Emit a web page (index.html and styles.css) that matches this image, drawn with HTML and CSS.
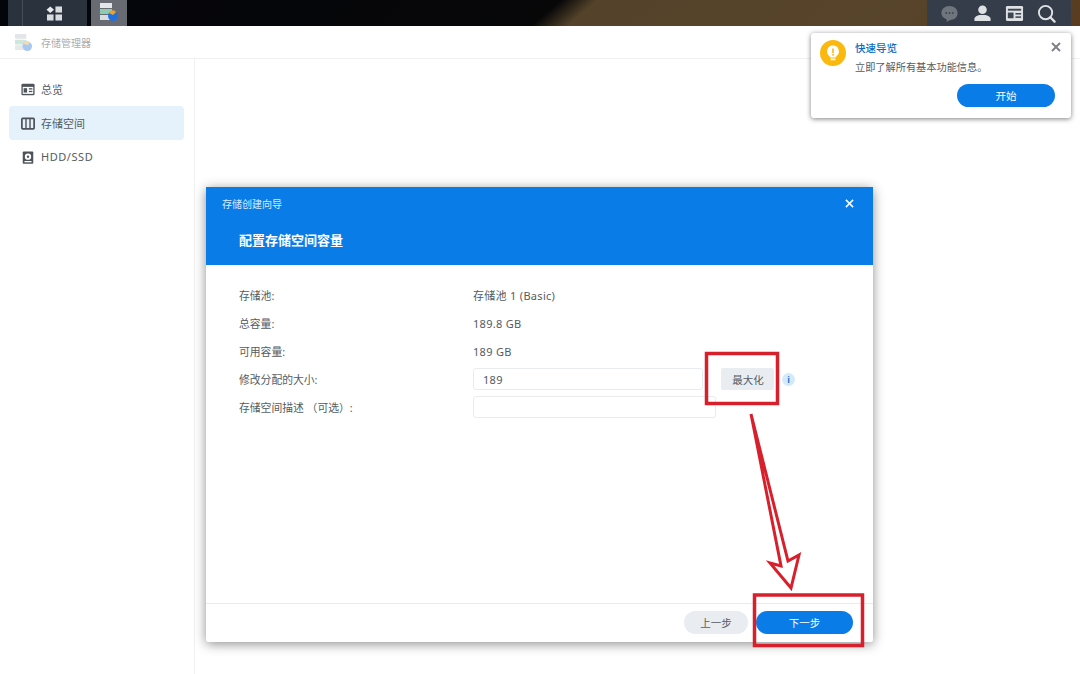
FILE: index.html
```html
<!DOCTYPE html>
<html lang="zh-CN">
<head>
<meta charset="utf-8">
<title>存储管理器</title>
<link rel="stylesheet" href="styles.css">
</head>
<body>
<header class="topbar">
  <div class="tasks">
    <div class="task-main">
      <span class="task-edge"></span>
      <span class="task-cell">
        <svg class="ic-grid" viewBox="0 0 18 16"><path d="M4.5 0.5 8.5 4 4.5 7.5 0.5 4Z" fill="#e8ebee"/><rect x="10" y="0.5" width="7" height="6.5" fill="#d8dce0"/><rect x="1" y="9" width="7" height="6.5" fill="#d8dce0"/><rect x="10" y="9" width="7" height="6.5" fill="#d8dce0"/></svg>
      </span>
    </div>
    <div class="task-active">
      <svg class="ic-app" viewBox="0 0 20 20"><rect x="1" y="1" width="12" height="5" fill="#e4e6e9"/><rect x="1" y="7" width="12" height="5" fill="#8fc9b0"/><rect x="1" y="13" width="10" height="5" fill="#d9dcdf"/><circle cx="14" cy="14" r="5" fill="#1f6fe0"/><path d="M10 11a4 4 0 0 1 7-1l-3 3z" fill="#f0a020"/></svg>
    </div>
  </div>
  <div class="tray">
    <svg class="ic-tray" viewBox="0 0 20 20"><path d="M10 2c5 0 8.500 3 8.500 7.500S15 17 10 17l-3 2v-3C3.500 15 1.500 13 1.500 9.500 1.500 5 5 2 10 2Z" fill="#6f757c"/><circle cx="6.500" cy="9.500" r="1" fill="#3d4650"/><circle cx="10" cy="9.500" r="1" fill="#3d4650"/><circle cx="13.500" cy="9.500" r="1" fill="#3d4650"/></svg>
    <svg class="ic-tray" viewBox="0 0 20 20"><circle cx="10" cy="6" r="4.500" fill="#dfe2e5"/><path d="M1.500 18v-2.500c0-2 3-3.500 5.500-4h6c2.500.5 5.500 2 5.500 4V18Z" fill="#dfe2e5"/></svg>
    <svg class="ic-tray" viewBox="0 0 20 20"><rect x="1" y="2" width="18" height="16" rx="1.500" fill="#dfe2e5"/><rect x="3" y="5" width="14" height="2" fill="#3d4650"/><rect x="3" y="9" width="6" height="6" fill="#3d4650"/><rect x="11" y="9.500" width="6" height="1.600" fill="#3d4650"/><rect x="11" y="13" width="6" height="1.600" fill="#3d4650"/></svg>
    <svg class="ic-tray" viewBox="0 0 20 20"><circle cx="9" cy="9" r="7" fill="none" stroke="#dfe2e5" stroke-width="2"/><path d="M14 14l4.500 4.500" stroke="#dfe2e5" stroke-width="2.400" stroke-linecap="round"/></svg>
  </div>
</header>

<div class="app-head">
  <svg class="ic-logo" viewBox="0 0 20 20"><rect x="1" y="1" width="12" height="5" rx="1" fill="#e3e5e8"/><rect x="1" y="7" width="12" height="5" rx="1" fill="#cfe6dc"/><rect x="1" y="13" width="12" height="5" rx="1" fill="#e6e8ea"/><circle cx="14" cy="14" r="5" fill="#a9c8f0"/><path d="M10 11a4 4 0 0 1 7-1l-3 3z" fill="#f4dcae"/></svg>
  <span class="app-title">存储管理器</span>
</div>

<div class="app-body">
  <nav class="sidebar">
    <div class="nav-item">
      <svg class="ic-nav" viewBox="0 0 16 14"><rect x="0.500" y="0.500" width="15" height="13" rx="1.500" fill="#4d5359"/><rect x="2" y="4" width="12" height="8" fill="#fff"/><rect x="3" y="5.500" width="4" height="5" fill="#4d5359"/><rect x="9" y="5.500" width="4" height="1.500" fill="#4d5359"/><rect x="9" y="8.500" width="4" height="1.500" fill="#4d5359"/></svg>
      <span>总览</span>
    </div>
    <div class="nav-item nav-active">
      <svg class="ic-nav" viewBox="0 0 16 14"><rect x="1" y="1" width="14" height="12" rx="1" fill="none" stroke="#4d5359" stroke-width="2"/><path d="M5.700 1v12M10.300 1v12" stroke="#4d5359" stroke-width="1.600"/></svg>
      <span>存储空间</span>
    </div>
    <div class="nav-item">
      <svg class="ic-nav" viewBox="0 0 16 14"><rect x="2" y="0" width="12" height="14" rx="1" fill="#4d5359"/><circle cx="8" cy="6" r="3.600" fill="#fff"/><circle cx="8" cy="6" r="1.400" fill="#4d5359"/><rect x="4" y="11" width="8" height="1.500" fill="#fff"/></svg>
      <span class="nav-latin">HDD/SSD</span>
    </div>
  </nav>
  <main class="content"></main>
</div>

<section class="dialog">
  <div class="dialog-head">
    <div class="dialog-topline">
      <span class="dialog-wizard">存储创建向导</span>
      <svg class="ic-close" viewBox="0 0 10 10"><path d="M1 1l8 8M9 1l-8 8" stroke="#fff" stroke-width="1.700"/></svg>
    </div>
    <h1 class="dialog-title">配置存储空间容量</h1>
  </div>
  <div class="dialog-body">
    <div class="form-row"><span class="form-label">存储池:</span><span class="value">存储池 1 (Basic)</span></div>
    <div class="form-row"><span class="form-label">总容量:</span><span class="value">189.8 GB</span></div>
    <div class="form-row"><span class="form-label">可用容量:</span><span class="value">189 GB</span></div>
    <div class="form-row">
      <span class="form-label">修改分配的大小:</span>
      <span class="field field-size value">189</span>
      <span class="max-btn">最大化</span>
      <span class="info-dot">i</span>
    </div>
    <div class="form-row">
      <span class="form-label">存储空间描述 （可选）:</span>
      <span class="field field-desc"></span>
    </div>
  </div>
  <div class="dialog-foot">
    <span class="btn btn-back">上一步</span>
    <span class="btn btn-next">下一步</span>
  </div>
</section>

<aside class="toast">
  <div class="toast-bulb">
    <svg class="ic-bulb" viewBox="0 0 14 16"><path d="M7 0.500a5.800 5.800 0 0 0-3.200 10.700V12.500h6.400v-1.300A5.800 5.800 0 0 0 7 0.500Z" fill="#fff"/><rect x="4.500" y="13.500" width="5" height="1.800" rx="0.600" fill="#fff"/><rect x="6.200" y="3.500" width="1.600" height="4.500" fill="#fbb80f"/><rect x="6.200" y="9" width="1.600" height="1.600" fill="#fbb80f"/></svg>
  </div>
  <div class="toast-main">
    <div class="toast-title">快速导览</div>
    <div class="toast-text">立即了解所有基本功能信息。</div>
    <div class="toast-actions"><span class="btn btn-start">开始</span></div>
  </div>
  <svg class="ic-toast-close" viewBox="0 0 10 10"><path d="M1 1l8 8M9 1l-8 8" stroke="#7a7f85" stroke-width="1.800"/></svg>
</aside>

<svg class="annotations" viewBox="0 0 1080 674">
  <rect x="706.500" y="353.500" width="71" height="50"/>
  <rect x="754.500" y="595" width="108" height="50.500"/>
  <path d="M751 414 781 566 770 563 791 588 799 555 788 561Z"/>
</svg>
</body>
</html>
```

FILE: styles.css
```css
* { box-sizing: border-box; }

html, body {
  margin: 0;
  width: 1080px;
  height: 674px;
  overflow: hidden;
}

body {
  position: relative;
  display: flex;
  flex-direction: column;
  background: #fff;
  color: #555b61;
  font-family: "Noto Sans", "Noto Sans CJK SC", sans-serif;
  font-size: 10.5px;
}

/* desktop bar */
.topbar {
  flex: none;
  height: 26px;
  display: flex;
  justify-content: space-between;
  padding: 0 9px 0 8px;
  background: linear-gradient(139deg, #04050b 0, #070708 368px, #54432a 392px, #57442a 600px, #5a3c20 728px);
}

.tasks { display: flex; gap: 4px; }

.task-main {
  display: flex;
  width: 79px;
  background: #2a323d;
}

.task-edge {
  width: 15px;
  border-right: 1px solid #454d58;
}

.task-cell {
  flex: 1;
  display: flex;
  align-items: center;
  justify-content: center;
  padding-right: 1px;
}

.ic-grid { width: 17px; height: 15px; }

.task-active {
  width: 36px;
  display: flex;
  align-items: center;
  justify-content: center;
  background: #686c72;
}

.ic-app { width: 20px; height: 20px; margin-top: -2px; }

.tray {
  width: 144px;
  display: flex;
  align-items: center;
  gap: 13px;
  padding: 0 13px 0 13px;
  background: #343d49;
}

.ic-tray { width: 19px; height: 19px; flex: none; }

.ic-tray:first-child { margin-right: 1px; }

/* application window */
.app-head {
  flex: none;
  height: 33px;
  display: flex;
  align-items: center;
  gap: 8px;
  padding-left: 14px;
  border-bottom: 1px solid #eef0f2;
}

.ic-logo { width: 19px; height: 19px; }

.app-title { color: #a9adb1; font-size: 10px; }

.app-body { flex: 1; display: flex; }

.sidebar {
  width: 195px;
  padding: 13px 10px 0 9px;
  border-right: 1px solid #eef0f2;
}

.nav-item {
  height: 34px;
  display: flex;
  align-items: center;
  gap: 6px;
  padding-left: 12px;
  border-radius: 4px;
  font-size: 11px;
}

.nav-active { background: #e5f1fb; }

.nav-latin { letter-spacing: 0.55px; margin-top: -1px; }

.ic-nav { width: 14px; height: 13px; }

.content { flex: 1; }

/* wizard dialog */
.dialog {
  position: absolute;
  left: 206px;
  top: 187px;
  width: 667px;
  height: 455px;
  display: flex;
  flex-direction: column;
  background: #fff;
  border-radius: 2px;
  box-shadow: 0 2px 12px rgba(0, 0, 0, 0.45);
}

.dialog-head {
  flex: none;
  height: 78px;
  padding: 9px 19px 0 16px;
  background: #0a7ce8;
  color: #fff;
}

.dialog-topline {
  display: flex;
  justify-content: space-between;
  align-items: center;
  height: 15px;
}

.dialog-wizard { font-size: 10px; color: #d9ecfc; }

.ic-close { width: 9px; height: 9px; }

.dialog-title {
  margin: 19px 0 0 17px;
  font-size: 13px;
  font-weight: 700;
  line-height: 20px;
}

.dialog-body {
  flex: 1;
  padding: 16px 33px 0;
}

.form-row {
  height: 28px;
  display: flex;
  align-items: center;
  font-size: 10.8px;
}

.form-label { width: 234px; flex: none; }

.value { font-size: 11px; letter-spacing: 0.3px; }

.field {
  height: 22px;
  display: flex;
  align-items: center;
  padding-left: 9px;
  background: #fff;
  border: 1px solid #e9ecef;
  border-radius: 3px;
}

.field-size { width: 230px; }
.field-desc { width: 243px; }

.max-btn {
  width: 53px;
  height: 22px;
  margin-left: 18px;
  padding-left: 1px;
  display: flex;
  align-items: center;
  justify-content: center;
  background: #e9edf1;
  border-radius: 2px;
  font-size: 10.5px;
}

.info-dot {
  width: 13px;
  height: 13px;
  margin-left: 8px;
  display: flex;
  align-items: center;
  justify-content: center;
  border-radius: 50%;
  background: #d4eafb;
  color: #1f7ac4;
  font-size: 9px;
  font-weight: 700;
}

.dialog-foot {
  flex: none;
  height: 39px;
  display: flex;
  justify-content: flex-end;
  gap: 8px;
  padding: 7px 20px 0 0;
  border-top: 1px solid #e8eaec;
}

.btn {
  height: 23px;
  display: flex;
  align-items: center;
  justify-content: center;
  border-radius: 12px;
  font-size: 10.5px;
}

.btn-back { width: 64px; background: #e9edf1; }
.btn-next { width: 97px; background: #0a7ce8; color: #fff; }

/* quick start toast */
.toast {
  position: absolute;
  left: 811px;
  top: 33px;
  width: 260px;
  height: 85px;
  display: flex;
  gap: 9px;
  padding: 7px 16px 0 9px;
  background: #fff;
  border-radius: 3px;
  box-shadow: 0 1px 5px rgba(0, 0, 0, 0.5);
}

.toast-bulb {
  width: 26px;
  height: 26px;
  flex: none;
  display: flex;
  align-items: center;
  justify-content: center;
  border-radius: 50%;
  background: #fbb80f;
}

.ic-bulb { width: 14px; height: 16px; }

.toast-main { flex: 1; }

.toast-title {
  height: 16px;
  line-height: 16px;
  color: #0a6cc2;
  font-size: 10.5px;
  font-weight: 500;
}

.toast-text {
  margin-top: 3px;
  height: 16px;
  line-height: 16px;
  font-size: 10.2px;
}

.toast-actions {
  margin-top: 9px;
  display: flex;
  justify-content: flex-end;
}

.btn-start { width: 98px; background: #0a7ce8; color: #fff; }

.ic-toast-close {
  position: absolute;
  right: 10px;
  top: 9px;
  width: 10px;
  height: 10px;
}

/* red markup drawn over the screenshot */
.annotations {
  position: absolute;
  left: 0;
  top: 0;
  width: 1080px;
  height: 674px;
  pointer-events: none;
  fill: none;
  stroke: #d8202c;
  stroke-width: 3.500;
}

.annotations path { stroke-width: 3; stroke-linejoin: miter; }
```
